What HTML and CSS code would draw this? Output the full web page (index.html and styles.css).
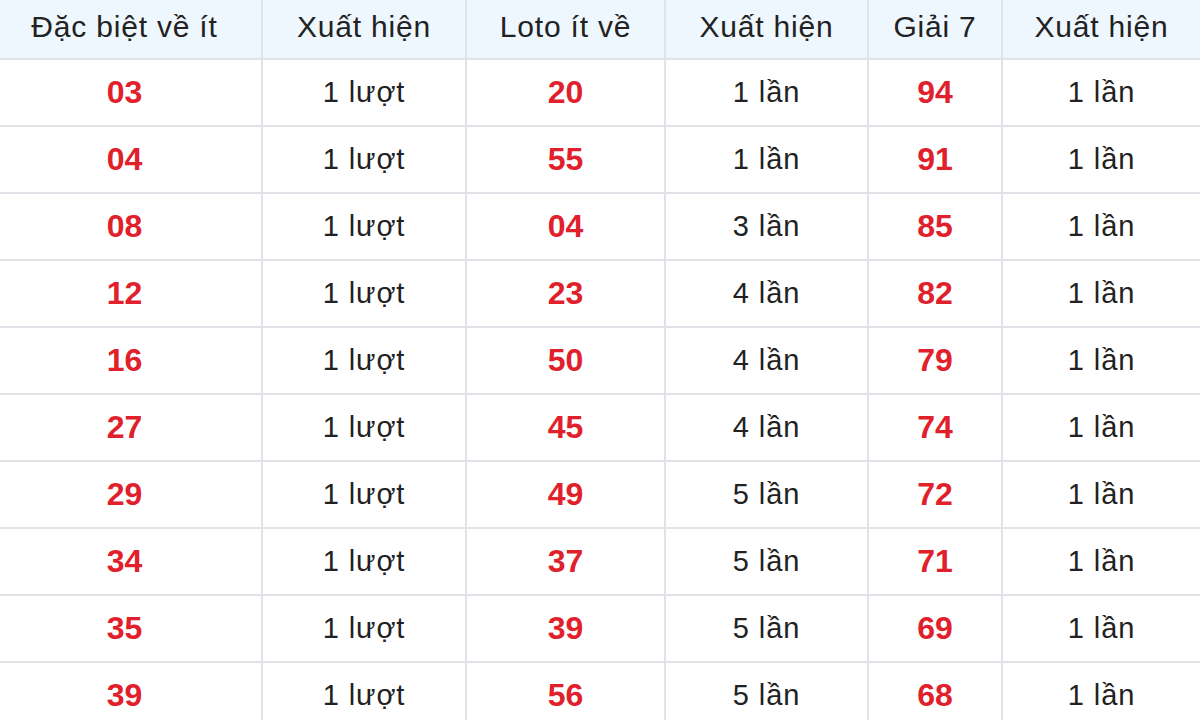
FILE: index.html
```html
<!DOCTYPE html>
<html lang="vi">
<head>
<meta charset="utf-8">
<title>Thống kê</title>
<link rel="stylesheet" href="styles.css">
</head>
<body>
<table class="stats">
  <colgroup>
    <col class="c1"><col class="c2"><col class="c3"><col class="c4"><col class="c5"><col class="c6">
  </colgroup>
  <thead>
    <tr><th>Đặc biệt về ít</th><th>Xuất hiện</th><th>Loto ít về</th><th>Xuất hiện</th><th>Giải 7</th><th>Xuất hiện</th></tr>
  </thead>
  <tbody>
    <tr><td class="num">03</td><td>1 lượt</td><td class="num">20</td><td>1 lần</td><td class="num">94</td><td>1 lần</td></tr>
    <tr><td class="num">04</td><td>1 lượt</td><td class="num">55</td><td>1 lần</td><td class="num">91</td><td>1 lần</td></tr>
    <tr><td class="num">08</td><td>1 lượt</td><td class="num">04</td><td>3 lần</td><td class="num">85</td><td>1 lần</td></tr>
    <tr><td class="num">12</td><td>1 lượt</td><td class="num">23</td><td>4 lần</td><td class="num">82</td><td>1 lần</td></tr>
    <tr><td class="num">16</td><td>1 lượt</td><td class="num">50</td><td>4 lần</td><td class="num">79</td><td>1 lần</td></tr>
    <tr><td class="num">27</td><td>1 lượt</td><td class="num">45</td><td>4 lần</td><td class="num">74</td><td>1 lần</td></tr>
    <tr><td class="num">29</td><td>1 lượt</td><td class="num">49</td><td>5 lần</td><td class="num">72</td><td>1 lần</td></tr>
    <tr><td class="num">34</td><td>1 lượt</td><td class="num">37</td><td>5 lần</td><td class="num">71</td><td>1 lần</td></tr>
    <tr><td class="num">35</td><td>1 lượt</td><td class="num">39</td><td>5 lần</td><td class="num">69</td><td>1 lần</td></tr>
    <tr><td class="num">39</td><td>1 lượt</td><td class="num">56</td><td>5 lần</td><td class="num">68</td><td>1 lần</td></tr>
  </tbody>
</table>
</body>
</html>
```
FILE: styles.css
```css
html, body {
  margin: 0;
  padding: 0;
  background: #ffffff;
}
body {
  font-family: "Liberation Sans", Arial, sans-serif;
  color: #222222;
  overflow: hidden;
}
.stats {
  width: 1200px;
  border-collapse: collapse;
  table-layout: fixed;
}
.c1 { width: 262px; }
.c2 { width: 204px; }
.c3 { width: 199px; }
.c4 { width: 203px; }
.c5 { width: 134px; }
.c6 { width: 198px; }
.stats th, .stats td {
  border: 2px solid #e0e3e7;
  text-align: center;
  padding: 0;
}
.stats tr > :first-child {
  border-left: none;
  padding-right: 12px;
}
.stats tr > :last-child { border-right: none; }
.stats thead th { border-top: none; }
.stats th {
  background: #eef6fe;
  height: 54px;
  padding-bottom: 4px;
  font-weight: normal;
  font-size: 30px;
  letter-spacing: 0.8px;
  color: #222222;
}
.stats td {
  height: 65px;
  font-size: 29px;
  letter-spacing: 0.9px;
}
.stats td.num {
  color: #e0212b;
  font-weight: bold;
  font-size: 32px;
  letter-spacing: 0;
}
```
